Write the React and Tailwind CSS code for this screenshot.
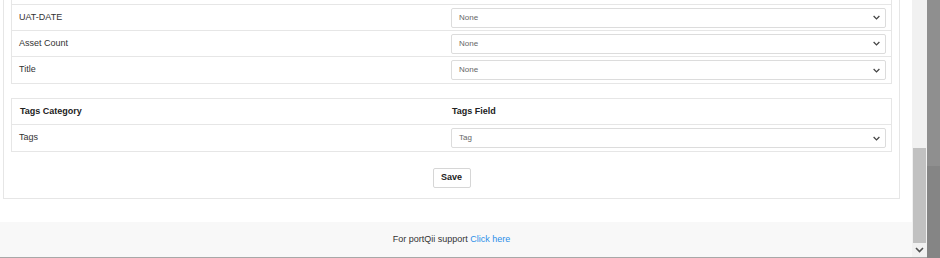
import React from "react";

function Chevron() {
  return (
    <svg width="9" height="9" viewBox="0 0 10 10" className="shrink-0">
      <path d="M1.8 3.4 L5 6.6 L8.2 3.4" fill="none" stroke="#444" strokeWidth="1.4" />
    </svg>
  );
}

function Select({ value }) {
  return (
    <div className="flex h-[20px] w-full items-center justify-between rounded-[2px] border border-[#dcdcdc] bg-white pl-[7px] pr-[4px] text-[8px] text-[#666]">
      <span>{value}</span>
      <Chevron />
    </div>
  );
}

function Row({ label, value, last }) {
  return (
    <div className={"grid h-[26px] grid-cols-[432px_1fr] items-center " + (last ? "" : "border-b border-[#e6e6e6]")}>
      <div className="pl-[7px] text-[9px] text-[#333]">{label}</div>
      <div className="pl-[7px] pr-[5px]">
        <Select value={value} />
      </div>
    </div>
  );
}

export default function App() {
  return (
    <div className="flex h-[258px] w-[940px] overflow-hidden bg-white font-['Liberation_Sans',Arial,sans-serif]">
      <div className="flex w-[912px] flex-col">
        <div className="ml-[3px] w-[897px] border-x border-b border-[#e6e6e6] bg-white px-[7px] pb-[10px]">
          <div className="border-x border-b border-[#e6e6e6]">
            <div className="h-[5px] border-b border-[#e6e6e6]" />
            <Row label="UAT-DATE" value="None" />
            <Row label="Asset Count" value="None" />
            <Row label="Title" value="None" last />
          </div>
          <div className="mt-[14px] border border-[#e6e6e6]">
            <div className="grid h-[26px] grid-cols-[432px_1fr] items-center border-b border-[#e6e6e6] text-[9px] font-bold text-[#222]">
              <div className="pl-[8px]">Tags Category</div>
              <div className="pl-[8px]">Tags Field</div>
            </div>
            <Row label="Tags" value="Tag" last />
          </div>
          <div className="mt-[16px] flex justify-center">
            <button className="h-[20px] w-[38px] rounded-[2px] border border-[#d6d6d6] bg-white text-[9px] font-bold text-[#222]">
              Save
            </button>
          </div>
        </div>
        <div className="h-[23px]" />
        <div className="flex flex-1 items-center justify-center border-b border-[#a8a8a8] bg-[#f8f8f8] pr-[9px] text-[9px] text-[#333]">
          <span>
            For portQii support <span className="text-[#2b8fe8]">Click here</span>
          </span>
        </div>
      </div>
      <div className="flex w-[15px] flex-col bg-[#f1f1f1]">
        <div className="h-[148px]" />
        <div className="mx-[1px] h-[95px] bg-[#c1c1c1]" />
        <div className="flex flex-1 items-center justify-center border-b border-[#a8a8a8]">
          <svg width="9" height="6" viewBox="0 0 9 6">
            <path d="M1 1 L4.5 4.5 L8 1" fill="none" stroke="#505050" strokeWidth="1.6" />
          </svg>
        </div>
      </div>
      <div className="flex w-[13px] flex-col">
        <div className="h-[166px] bg-[#8f8f8f]" />
        <div className="flex-1 bg-[#858585]" />
      </div>
    </div>
  );
}
